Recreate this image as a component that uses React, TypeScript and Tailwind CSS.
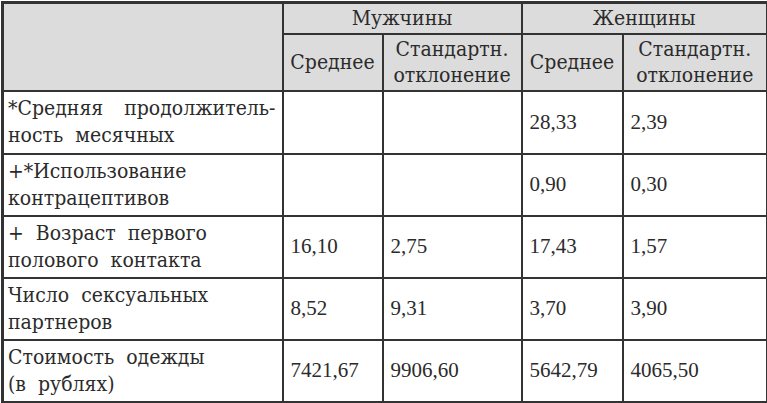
const rows = [
  { label: ["*Средняя продолжитель-", "ность месячных"], m: ["", ""], f: ["28,33", "2,39"], h: "h-[63px]", just: true },
  { label: ["+*Использование", "контрацептивов"], m: ["", ""], f: ["0,90", "0,30"], h: "h-[62px]", just: false },
  { label: ["+ Возраст первого", "полового контакта"], m: ["16,10", "2,75"], f: ["17,43", "1,57"], h: "h-[62px]", just: false },
  { label: ["Число сексуальных", "партнеров"], m: ["8,52", "9,31"], f: ["3,70", "3,90"], h: "h-[62px]", just: false },
  { label: ["Стоимость одежды", "(в рублях)"], m: ["7421,67", "9906,60"], f: ["5642,79", "4065,50"], h: "h-[63px]", just: false },
]

const text = "font-['DejaVu_Serif_Condensed','DejaVu_Serif',serif] text-[21px] text-[#2b2b2b]"
const cell = "border-2 border-[#333] px-[6px] align-middle font-normal"
const num = `${cell} pl-[7px] font-['Liberation_Serif',serif] text-[21px] leading-[27px] text-[#2b2b2b]`

export default function App() {
  return (
    <div className="min-h-[403px] w-[767px] bg-white pl-[1px] pt-[1px]">
      <table className={`w-[765px] table-fixed border-collapse border-[3px] border-[#333] ${text}`}>
        <colgroup>
          <col className="w-[280px]" />
          <col className="w-[100px]" />
          <col className="w-[139px]" />
          <col className="w-[101px]" />
          <col className="w-[145px]" />
        </colgroup>
        <thead className="bg-[#dcdcdc]">
          <tr className="h-[31px]">
            <th className={`${cell} ${text}`} rowSpan={2}></th>
            <th className={`${cell} ${text} text-center leading-[26px]`} colSpan={2}>Мужчины</th>
            <th className={`${cell} ${text} text-center leading-[26px]`} colSpan={2}>Женщины</th>
          </tr>
          <tr className="h-[57px]">
            <th className={`${cell} ${text} px-0 text-center leading-[26px]`}>Среднее</th>
            <th className={`${cell} ${text} px-0 text-center leading-[26px]`}>
              Стандартн.
              <br />
              отклонение
            </th>
            <th className={`${cell} ${text} px-0 text-center leading-[26px]`}>Среднее</th>
            <th className={`${cell} ${text} px-0 text-center leading-[26px]`}>
              Стандартн.
              <br />
              отклонение
            </th>
          </tr>
        </thead>
        <tbody>
          {rows.map((r) => (
            <tr key={r.label[0]} className={r.h}>
              <td className={`${cell} ${text} pl-[4px] leading-[27px] whitespace-nowrap`}>
                <div className={r.just ? "text-justify [text-align-last:justify]" : "[word-spacing:6px]"}>
                  {r.label[0]}
                </div>
                <div className="[word-spacing:6px]">{r.label[1]}</div>
              </td>
              <td className={num}>{r.m[0]}</td>
              <td className={num}>{r.m[1]}</td>
              <td className={num}>{r.f[0]}</td>
              <td className={num}>{r.f[1]}</td>
            </tr>
          ))}
        </tbody>
      </table>
    </div>
  )
}
